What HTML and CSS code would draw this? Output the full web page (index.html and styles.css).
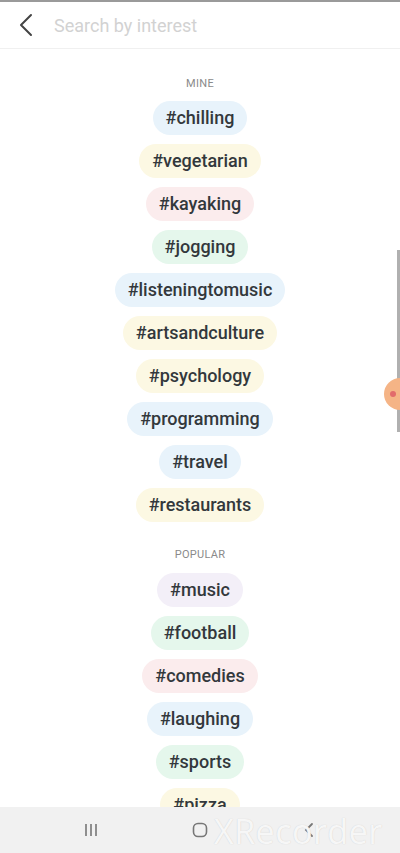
FILE: index.html
```html
<!DOCTYPE html>
<html lang="en">
<head>
  <meta charset="UTF-8" />
  <title>Search by interest</title>
  <link rel="stylesheet" href="styles.css">
</head>
<body>
  <div class="screen">
    <div class="header">
      <svg class="back" width="16" height="24" viewBox="0 0 16 24">
        <path d="M13 2 L3 12 L13 22" fill="none" stroke="#444" stroke-width="2" stroke-linecap="round" stroke-linejoin="round"/>
      </svg>
      <input class="search" type="text" placeholder="Search by interest">
    </div>

    <div class="list">
      <div class="label">MINE</div>
      <div class="chip blue">#chilling</div>
      <div class="chip yellow">#vegetarian</div>
      <div class="chip pink">#kayaking</div>
      <div class="chip green">#jogging</div>
      <div class="chip blue">#listeningtomusic</div>
      <div class="chip yellow">#artsandculture</div>
      <div class="chip yellow">#psychology</div>
      <div class="chip blue">#programming</div>
      <div class="chip blue">#travel</div>
      <div class="chip yellow">#restaurants</div>

      <div class="label popular">POPULAR</div>
      <div class="chip purple">#music</div>
      <div class="chip green">#football</div>
      <div class="chip pink">#comedies</div>
      <div class="chip blue">#laughing</div>
      <div class="chip green">#sports</div>
      <div class="chip yellow">#pizza</div>
    </div>

    <div class="scrollbar"></div>
    <div class="bubble"><span></span></div>

    <div class="navbar">
      <div class="nav-item">
        <svg width="16" height="16" viewBox="0 0 16 16">
          <path d="M3 2 V14 M8 2 V14 M13 2 V14" stroke="#777" stroke-width="1.6"/>
        </svg>
      </div>
      <div class="nav-item">
        <svg width="16" height="16" viewBox="0 0 16 16">
          <rect x="1.5" y="1.5" width="13" height="13" rx="4.5" fill="none" stroke="#777" stroke-width="1.6"/>
        </svg>
      </div>
      <div class="nav-item">
        <svg width="16" height="16" viewBox="0 0 16 16">
          <path d="M11 2 L5 8 L11 14" fill="none" stroke="#777" stroke-width="1.8" stroke-linecap="round"/>
        </svg>
      </div>
      <div class="watermark">XRecorder</div>
    </div>
  </div>
</body>
</html>
```

FILE: styles.css
```css
body {
  margin: 0;
  padding: 0;
  font-family: Roboto, 'Noto Sans', sans-serif;
  background: #fff;
  overflow: hidden;
}
.screen {
  position: relative;
  width: 400px;
  height: 853px;
  overflow: hidden;
  border-top: 2px solid #9a9a9a;
  box-sizing: border-box;
}
.header {
  display: flex;
  align-items: center;
  height: 46px;
  border-bottom: 1px solid #f0f0f0;
  padding-left: 18px;
}
.back {
  flex-shrink: 0;
}
.search {
  border: none;
  outline: none;
  margin-left: 20px;
  font-family: Roboto, sans-serif;
  font-size: 18px;
  color: #333;
  background: transparent;
  width: 280px;
  padding: 0;
}
.search::placeholder {
  color: #d2d2d2;
}
.list {
  display: flex;
  flex-direction: column;
  align-items: center;
  gap: 9px;
  padding-top: 28px;
}
.label {
  font-size: 11px;
  line-height: 14px;
  color: #8a8a8a;
  letter-spacing: 0.3px;
  margin-bottom: 1px;
}
.label.popular {
  margin-top: 17px;
  margin-bottom: 2px;
}
.chip {
  height: 34px;
  line-height: 34px;
  padding: 0 13px;
  border-radius: 17px;
  font-size: 18px;
  font-weight: 500;
  color: #33383c;
}
.chip.blue { background: #e8f3fb; }
.chip.yellow { background: #fcf8e3; }
.chip.pink { background: #fbeced; }
.chip.green { background: #e5f7ec; }
.chip.purple { background: #f3eff8; }
.scrollbar {
  position: absolute;
  right: 0;
  top: 248px;
  width: 3px;
  height: 182px;
  background: #b0b0b0;
}
.bubble {
  position: absolute;
  right: -16px;
  top: 376px;
  width: 32px;
  height: 32px;
  border-radius: 50%;
  background: #f5b486;
}
.bubble span {
  position: absolute;
  left: 6px;
  top: 13px;
  width: 6px;
  height: 6px;
  border-radius: 50%;
  background: #e26b6b;
}
.navbar {
  position: absolute;
  left: 0;
  bottom: 0;
  width: 400px;
  height: 46px;
  background: #f1f1f1;
  display: flex;
  justify-content: space-around;
  align-items: center;
  padding: 0 36px;
  box-sizing: border-box;
}
.nav-item {
  width: 40px;
  display: flex;
  justify-content: center;
}
.watermark {
  position: absolute;
  left: 214px;
  top: 1px;
  font-family: 'Open Sans', sans-serif;
  font-size: 34px;
  color: rgba(255, 255, 255, 0.85);
  text-shadow: 0 0 1px #c8c8c8;
  letter-spacing: 0.5px;
}
```
